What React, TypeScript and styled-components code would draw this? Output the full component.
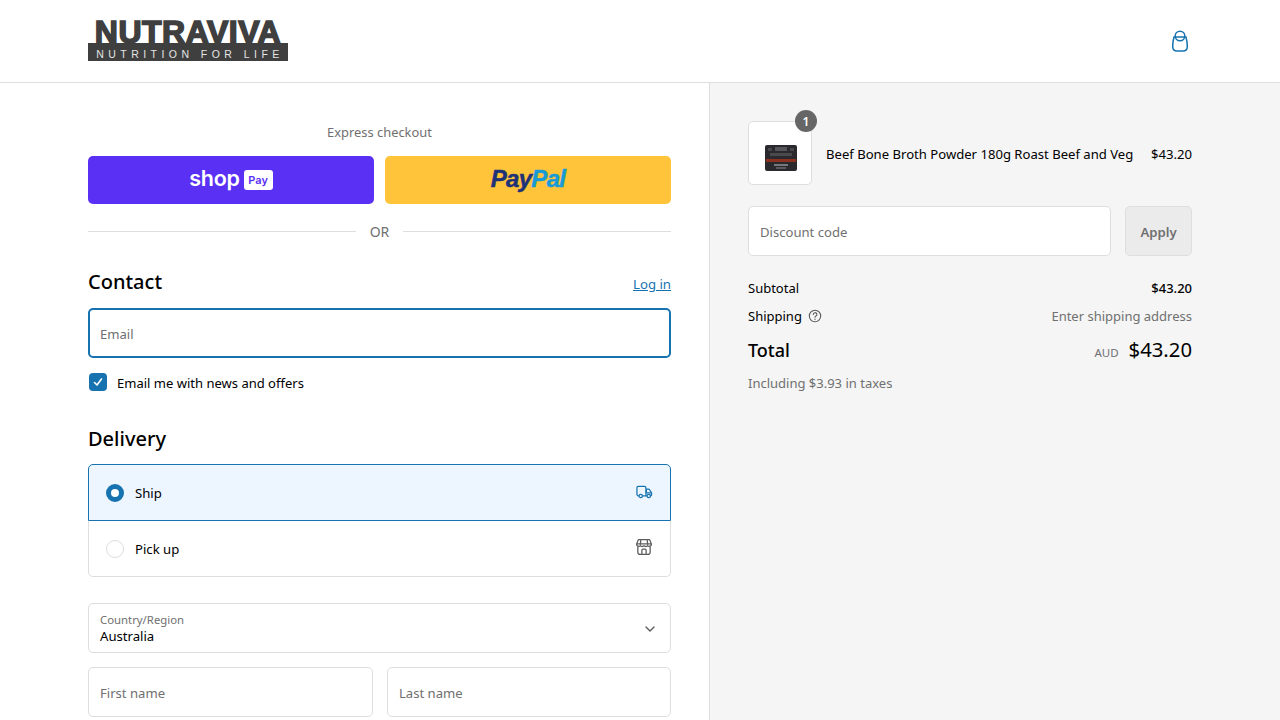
import React from "react";
import styled, { createGlobalStyle } from "styled-components";

const Global = createGlobalStyle`
  html, body { margin: 0; padding: 0; height: 720px; overflow: hidden; background: #fff; }
  body { font-family: "Noto Sans", "Open Sans", sans-serif; font-size: 13.15px; color: #000; }
  * { box-sizing: border-box; }
`;
const Header = styled.header`
  height: 83px; border-bottom: 1px solid #dedede; background: #fff;
  display: flex; align-items: center; justify-content: space-between; padding: 0 88px;
`;
const Logo = styled.div`display: flex; flex-direction: column; width: 200px; height: 40px; align-items: stretch;`;
const LogoWord = styled.div`
  font-family: "Liberation Sans", sans-serif; font-weight: 700; font-size: 32px; line-height: 22px; height: 22px;
  color: #3f3f3f; text-align: center; letter-spacing: 0.5px; -webkit-text-stroke: 1.6px #3f3f3f; white-space: nowrap;
`;
const LogoBar = styled.div`
  background: #3f3f3f; color: #e4e4e4; height: 18px; padding: 4px 0 0 4px; font-family: "Liberation Sans", sans-serif; font-size: 10.5px; line-height: 14px;
  letter-spacing: 4.45px; text-align: center; white-space: nowrap; font-weight: 400;
`;
const Main = styled.main`display: grid; grid-template-columns: 710px 1fr; height: 637px;`;
const Left = styled.section`border-right: 1px solid #dedede; padding: 38px 38px 0 88px; overflow: hidden;`;
const Right = styled.aside`background: #f5f5f5; padding: 38px 88px 0 38px; display: flex; flex-direction: column;`;
const Express = styled.div`text-align: center; color: #707070; font-size: 12.9px; line-height: 22px; height: 22px;`;
const PayRow = styled.div`display: grid; grid-template-columns: 286px 286px; gap: 11px; margin-top: 13px;`;
const PayButton = styled.div<{ $bg: string }>`
  height: 48px; border-radius: 5px; background: ${p => p.$bg}; display: flex; align-items: center; justify-content: center;
`;
const ShopWord = styled.span`color: #fff; font-family: "Inter", sans-serif; font-weight: 600; font-size: 21.5px; line-height: 48px; letter-spacing: -0.3px; margin-top: -4px;`;
const PayBadge = styled.span`
  background: #fff; color: #5a31f4; border-radius: 3px; font-family: "Inter", sans-serif; font-weight: 600; font-size: 11px;
  width: 29px; height: 20px; display: flex; align-items: center; justify-content: center; margin-left: 4px;
`;
const PayPalWord = styled.span<{ $c: string }>`
  color: ${p => p.$c}; font-family: "Liberation Sans", sans-serif; font-weight: 700; font-style: italic; font-size: 24px; letter-spacing: -0.7px; -webkit-text-stroke: 0.5px ${p => p.$c}; margin-top: -2px;
`;
const OrRow = styled.div`display: flex; align-items: center; gap: 14px; margin-top: 17px; color: #707070; font-size: 14px; line-height: 22px;`;
const Line = styled.div`flex: 1; height: 1px; background: #dedede; margin-top: -1px;`;
const HeadRow = styled.div`display: flex; justify-content: space-between; align-items: center; margin-top: 24px; height: 30px;`;
const Heading = styled.h2`margin: 0; font-size: 20px; line-height: 30px; font-weight: 500; color: #000;`;
const LogIn = styled.a`color: #1773b0; font-size: 13.2px; text-decoration: underline; margin-top: 4px;`;
const Field = styled.div<{ $focus?: boolean }>`
  height: 50px; border-radius: 5px; background: #fff; display: flex; align-items: center;
  border: ${p => (p.$focus ? "2px solid #1773b0" : "1px solid #dedede")};
  padding: 2px ${p => (p.$focus ? "10px" : "11px")} 0;
  color: #707070; font-size: 13.1px;
`;
const EmailField = styled(Field)`margin-top: 11px;`;
const CheckRow = styled.div`display: flex; align-items: center; gap: 10px; margin-top: 15px; padding-left: 1px; height: 18px;`;
const Check = styled.div`width: 18px; height: 18px; border-radius: 4px; background: #1773b0; display: flex; align-items: center; justify-content: center;`;
const CheckLabel = styled.span`padding-top: 2px; font-size: 13.03px;`;
const DeliveryHead = styled(Heading)`margin-top: 33px;`;
const Options = styled.div`margin-top: 10px; display: flex; flex-direction: column;`;
const Option = styled.div<{ $on?: boolean }>`
  display: flex; align-items: center; padding: 0 18px 0 17px;
  height: ${p => (p.$on ? "57px" : "56px")};
  background: ${p => (p.$on ? "#edf5fe" : "#fff")};
  border: 1px solid ${p => (p.$on ? "#1773b0" : "#dedede")};
  border-top-width: ${p => (p.$on ? "1px" : "0")};
  border-radius: ${p => (p.$on ? "5px 5px 0 0" : "0 0 5px 5px")};
`;
const Radio = styled.div<{ $on?: boolean }>`
  width: 18px; height: 18px; border-radius: 50%; margin-right: 11px; flex: none;
  ${p => (p.$on ? "border: 5.5px solid #1773b0; background: #fff;" : "border: 1px solid #dedede; background: #fff;")}
`;
const OptionLabel = styled.span`flex: 1;`;
const TruckIcon = styled.svg`margin: 0 -1px 2px 0;`;
const StoreIcon = styled.svg`margin-bottom: 4px;`;
const Select = styled.div`
  margin-top: 26px; height: 50px; border: 1px solid #dedede; border-radius: 5px; padding: 0 15px 0 11px;
  display: flex; align-items: center; justify-content: space-between;
`;
const SelectText = styled.div`display: flex; flex-direction: column; margin-top: -1px;`;
const SelectLabel = styled.span`font-size: 11.35px; line-height: 16px; color: #707070;`;
const SelectValue = styled.span`line-height: 16px;`;
const ChevronIcon = styled.svg`margin-top: 2px;`;
const NameRow = styled.div`display: grid; grid-template-columns: 285px 284px; gap: 14px; margin-top: 14px;`;
const Product = styled.div`display: flex; align-items: center;`;
const Thumb = styled.div`
  position: relative; width: 64px; height: 64px; background: #fff; border: 1px solid #dedede; border-radius: 5px;
  display: flex; align-items: center; justify-content: center; margin-right: 14px; flex: none;
`;
const JarIcon = styled.svg`margin: 10px 0 0 2px;`;
const Count = styled.span`
  position: absolute; top: -12px; right: -6px; width: 22px; height: 22px; border-radius: 50%; background: #666; color: #fff;
  font-size: 12px; font-weight: 600; display: flex; align-items: center; justify-content: center;
`;
const ProductName = styled.span`flex: 1; white-space: nowrap; padding-top: 2px; font-size: 13.1px;`;
const ProductPrice = styled.span`padding-top: 2px;`;
const DiscountRow = styled.div`display: flex; gap: 14px; margin-top: 21px;`;
const DiscountField = styled(Field)`flex: 1;`;
const Apply = styled.div`
  width: 67px; height: 50px; border-radius: 5px; background: #ebebeb; border: 1px solid #dedede; color: #707070;
  font-weight: 600; display: flex; align-items: center; justify-content: center; padding-top: 2px;
`;
const SumRow = styled.div<{ $top: number; $h?: number }>`
  display: flex; justify-content: space-between; align-items: center; margin-top: ${p => p.$top}px; height: ${p => p.$h ?? 20}px; font-size: 13px;
`;
const Inline = styled.span`display: flex; align-items: center; gap: 6px;`;
const Strong = styled.span`font-weight: 500;`;
const Muted = styled.span`color: #707070;`;
const TotalLabel = styled.span`font-size: 18px; font-weight: 500;`;
const AmountGroup = styled.span`display: flex; align-items: center; gap: 5px; margin-top: -2px;`;
const Currency = styled.span`font-size: 11.5px; color: #707070; margin-right: 5px; position: relative; top: 3px;`;
const TotalValue = styled.span`font-size: 20.3px; font-weight: 400;`;
const Taxes = styled.div`margin-top: 9px; color: #707070; font-size: 13px; line-height: 20px;`;

export default function App() {
  return (
    <>
      <Global />
      <Header>
        <Logo>
          <LogoWord>NUTRAVIVA</LogoWord>
          <LogoBar>NUTRITION FOR LIFE</LogoBar>
        </Logo>
        <svg width="20" height="22" viewBox="0 0 20 22" fill="none" stroke="#1773b0" strokeWidth="1.5">
          <path d="M2 7h12c.8 3 1.300 6 1.300 9.500 0 2.800-1.700 4.500-4.300 4.500H5c-2.600 0-4.300-1.700-4.300-4.500C.7 13 1.200 10 2 7z" />
          <circle cx="8" cy="6" r="4.800" />
        </svg>
      </Header>
      <Main>
        <Left>
          <Express>Express checkout</Express>
          <PayRow>
            <PayButton $bg="#5a31f4">
              <ShopWord>shop</ShopWord>
              <PayBadge>Pay</PayBadge>
            </PayButton>
            <PayButton $bg="#ffc439">
              <PayPalWord $c="#1f3277">Pay</PayPalWord>
              <PayPalWord $c="#179bd7">Pal</PayPalWord>
            </PayButton>
          </PayRow>
          <OrRow><Line />OR<Line /></OrRow>
          <HeadRow>
            <Heading>Contact</Heading>
            <LogIn>Log in</LogIn>
          </HeadRow>
          <EmailField $focus>Email</EmailField>
          <CheckRow>
            <Check>
              <svg width="12" height="12" viewBox="0 0 12 12" fill="none" stroke="#fff" strokeWidth="1.6" strokeLinecap="round" strokeLinejoin="round">
                <path d="M2.500 6.500 5 9l4.500-6" />
              </svg>
            </Check>
            <CheckLabel>Email me with news and offers</CheckLabel>
          </CheckRow>
          <DeliveryHead>Delivery</DeliveryHead>
          <Options>
            <Option $on>
              <Radio $on />
              <OptionLabel>Ship</OptionLabel>
              <TruckIcon width="17" height="14" viewBox="0 0 18 14" fill="none" stroke="#1773b0" strokeWidth="1.300" strokeLinejoin="round">
                <path d="M3 11H2.500A1.500 1.500 0 0 1 1 9.500v-7A1.500 1.500 0 0 1 2.500 1H9a1.500 1.500 0 0 1 1.500 1.500V11H7" />
                <path d="M10.500 4h2.700c.5 0 1 .3 1.200.7l1.900 2.800c.1.200.2.400.2.700V10c0 .6-.4 1-1 1h-.7M11.500 11h-1" />
                <path d="M11 4.500V8h5" />
                <circle cx="5" cy="11.200" r="1.800" />
                <circle cx="13.500" cy="11.200" r="1.800" />
              </TruckIcon>
            </Option>
            <Option>
              <Radio />
              <OptionLabel>Pick up</OptionLabel>
              <StoreIcon width="16" height="16" viewBox="0.500 0.500 15 15" fill="none" stroke="#5c5c5c" strokeWidth="1.200" strokeLinejoin="round">
                <path d="M3.500 1h9c.5 0 .9.300 1.100.8L15 5.500a2 2 0 0 1-3.500 1.200 2.500 2.500 0 0 1-3.500 0 2.500 2.500 0 0 1-3.500 0A2 2 0 0 1 1 5.500l1.400-3.700C2.600 1.300 3 1 3.500 1z" />
                <path d="M1 5h14M5 1.500 4.500 6M11 1.500 11.500 6" />
                <path d="M2.200 7.500V13c0 1.100.9 2 2 2h7.600c1.100 0 2-.9 2-2V7.500" />
                <path d="M6 15v-4c0-.6.400-1 1-1h2c.6 0 1 .4 1 1v4" />
              </StoreIcon>
            </Option>
          </Options>
          <Select>
            <SelectText>
              <SelectLabel>Country/Region</SelectLabel>
              <SelectValue>Australia</SelectValue>
            </SelectText>
            <ChevronIcon width="10" height="6" viewBox="0 0 10 6" fill="none" stroke="#5c5c5c" strokeWidth="1.400" strokeLinecap="round" strokeLinejoin="round">
              <path d="M1 1l4 4 4-4" />
            </ChevronIcon>
          </Select>
          <NameRow>
            <Field>First name</Field>
            <Field>Last name</Field>
          </NameRow>
        </Left>
        <Right>
          <Product>
            <Thumb>
              <JarIcon width="32" height="26" viewBox="0 0 32 26">
                <rect x="0" y="0" width="32" height="26" rx="2" fill="#2a2a2e" />
                <rect x="10" y="2" width="12" height="4" fill="#55555a" />
                <rect x="3" y="3" width="4" height="3" fill="#47474c" />
                <rect x="25" y="3" width="4" height="3" fill="#47474c" />
                <rect x="5" y="8" width="22" height="3" fill="#4a4a4e" />
                <rect x="1" y="14" width="30" height="3" fill="#8c3020" />
                <rect x="9" y="19" width="14" height="2" fill="#77777c" />
                <rect x="11" y="22" width="10" height="2" fill="#5a5a60" />
              </JarIcon>
              <Count>1</Count>
            </Thumb>
            <ProductName>Beef Bone Broth Powder 180g Roast Beef and Veg</ProductName>
            <ProductPrice>$43.20</ProductPrice>
          </Product>
          <DiscountRow>
            <DiscountField>Discount code</DiscountField>
            <Apply>Apply</Apply>
          </DiscountRow>
          <SumRow $top={22}>
            <span>Subtotal</span>
            <Strong>$43.20</Strong>
          </SumRow>
          <SumRow $top={8}>
            <Inline>
              Shipping
              <svg width="14" height="14" viewBox="0 0 14 14" fill="none" stroke="#5c5c5c" strokeWidth="1.100">
                <circle cx="7" cy="7" r="5.700" />
                <path d="M5.300 5.500a1.800 1.800 0 1 1 2.600 1.600c-.6.300-.9.600-.9 1.200" strokeLinecap="round" />
                <path d="M7 10v.4" strokeLinecap="round" />
              </svg>
            </Inline>
            <Muted>Enter shipping address</Muted>
          </SumRow>
          <SumRow $top={10} $h={28}>
            <TotalLabel>Total</TotalLabel>
            <AmountGroup>
              <Currency>AUD</Currency>
              <TotalValue>$43.20</TotalValue>
            </AmountGroup>
          </SumRow>
          <Taxes>Including $3.93 in taxes</Taxes>
        </Right>
      </Main>
    </>
  );
}
